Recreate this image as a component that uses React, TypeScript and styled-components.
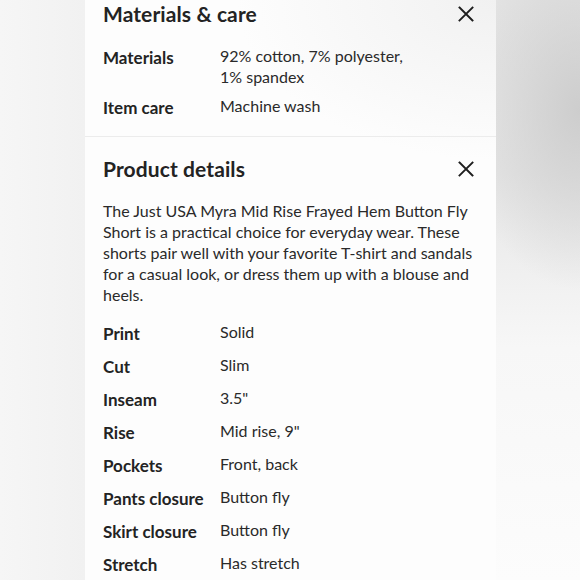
import styled, { createGlobalStyle } from 'styled-components';

const GlobalStyle = createGlobalStyle`
  html, body {
    margin: 0;
    padding: 0;
  }
  body {
    font-family: 'Lato', 'Noto Sans', sans-serif;
    color: #252525;
    -webkit-font-smoothing: antialiased;
  }
`;

const Stage = styled.div`
  width: 580px;
  height: 580px;
  overflow: hidden;
  display: grid;
  grid-template-columns: 85px 411px 1fr;
  background: #f4f4f4;
`;

const SideLeft = styled.div`
  background: linear-gradient(90deg, #f6f6f6 0%, #f1f1f1 100%);
`;

const SideRight = styled.div`
  background:
    radial-gradient(ellipse 120px 180px at 100% 110px, #cdcdcd 0%, rgba(205, 205, 205, 0) 100%),
    linear-gradient(180deg, #e4e4e4 0%, #e6e6e6 30%, #f7f7f7 60%, #fcfcfc 100%);
`;

const Panel = styled.div`
  background:
    radial-gradient(ellipse 260px 160px at 100% 0%, #f1f1f1 0%, rgba(255, 255, 255, 0) 100%),
    #fdfdfd;
  display: flex;
  flex-direction: column;
`;

const Section = styled.section<{ $divider?: boolean }>`
  padding: ${(p) => (p.$divider ? '18px 21px 0 18px' : '0 21px 16px 18px')};
  border-bottom: ${(p) => (p.$divider ? 'none' : '1px solid #ececec')};
`;

const Header = styled.div`
  display: flex;
  align-items: center;
  justify-content: space-between;
  height: 28px;
`;

const Title = styled.h2`
  margin: 0;
  font-size: 21px;
  font-weight: 700;
  line-height: 28px;
  letter-spacing: 0.1px;
  color: #232323;
`;

const CloseButton = styled.button`
  border: none;
  background: none;
  padding: 0;
  width: 18px;
  height: 18px;
  display: flex;
  align-items: center;
  justify-content: center;
  cursor: pointer;
  color: #1e1e1e;
`;

const Description = styled.p`
  margin: 17px 0 0;
  padding-right: 1px;
  font-size: 16px;
  line-height: 21px;
  color: #2a2a2a;
`;

const SpecGrid = styled.dl<{ $top: number }>`
  margin: ${(p) => p.$top}px 0 0;
  display: grid;
  grid-template-columns: 117px 1fr;
  row-gap: 8px;
  align-items: start;
`;

const SpecLabel = styled.dt`
  margin: 0;
  font-size: 17px;
  font-weight: 700;
  line-height: 25px;
  color: #232323;
`;

const SpecValue = styled.dd`
  margin: 0;
  font-size: 16px;
  line-height: 21px;
  color: #2a2a2a;
`;

const CloseIcon = () => (
  <svg width="16" height="16" viewBox="0 0 16 16" fill="none">
    <path d="M1.5 1.5 L14.5 14.5 M14.5 1.5 L1.5 14.5" stroke="currentColor" strokeWidth="1.9" strokeLinecap="square" />
  </svg>
);

const materials: [string, string][] = [
  ['Materials', '92% cotton, 7% polyester,\n1% spandex'],
  ['Item care', 'Machine wash'],
];

const details: [string, string][] = [
  ['Print', 'Solid'],
  ['Cut', 'Slim'],
  ['Inseam', '3.5"'],
  ['Rise', 'Mid rise, 9"'],
  ['Pockets', 'Front, back'],
  ['Pants closure', 'Button fly'],
  ['Skirt closure', 'Button fly'],
  ['Stretch', 'Has stretch'],
];

const Specs = ({ rows, top }: { rows: [string, string][]; top: number }) => (
  <SpecGrid $top={top}>
    {rows.flatMap(([label, value]) => [
      <SpecLabel key={label + '-l'}>{label}</SpecLabel>,
      <SpecValue key={label + '-v'}>
        {value.split('\n').map((line, i) => (
          <div key={i}>{line}</div>
        ))}
      </SpecValue>,
    ])}
  </SpecGrid>
);

export default function App() {
  return (
    <>
      <GlobalStyle />
      <Stage>
        <SideLeft />
        <Panel>
          <Section>
            <Header>
              <Title>Materials &amp; care</Title>
              <CloseButton aria-label="Close">
                <CloseIcon />
              </CloseButton>
            </Header>
            <Specs rows={materials} top={17} />
          </Section>
          <Section $divider>
            <Header>
              <Title>Product details</Title>
              <CloseButton aria-label="Close">
                <CloseIcon />
              </CloseButton>
            </Header>
            <Description>
              The Just USA Myra Mid Rise Frayed Hem Button Fly Short is a practical choice for
              everyday wear. These shorts pair well with your favorite T-shirt and sandals for a
              casual look, or dress them up with a blouse and heels.
            </Description>
            <Specs rows={details} top={16} />
          </Section>
        </Panel>
        <SideRight />
      </Stage>
    </>
  );
}
